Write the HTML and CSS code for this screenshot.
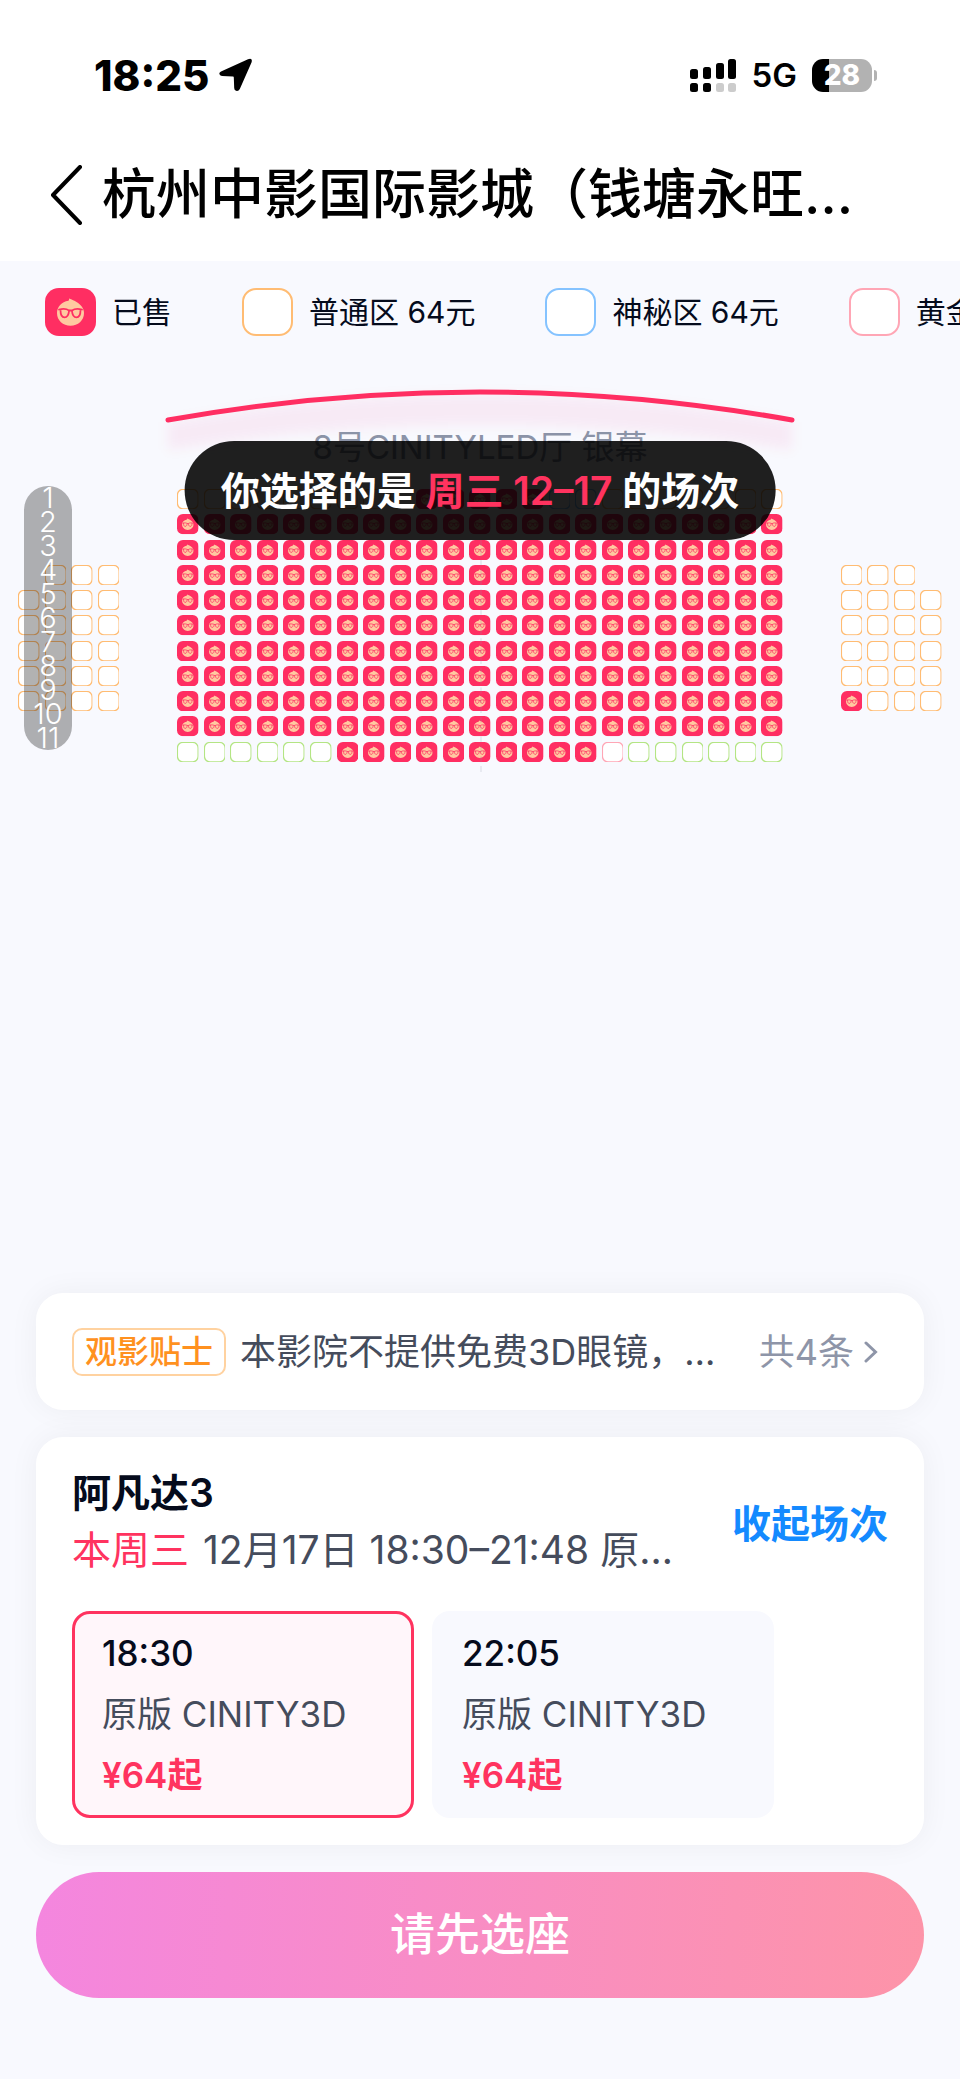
FILE: index.html
```html
<!DOCTYPE html>
<html lang="zh-CN">
<head>
<meta charset="utf-8">
<meta name="viewport" content="width=device-width, initial-scale=1">
<title>选座</title>
<link rel="stylesheet" href="styles.css">
</head>
<body>
<svg class="defs" aria-hidden="true">
  <symbol id="seat-sold" viewBox="0 0 51 48">
    <rect width="51" height="48" rx="14" fill="#ff2e62"/>
    <path d="M24 10.5C27 11.500 29.500 12.800 31.500 14C36 16.500 39 20.500 39 25C39 32.500 33 37.700 25.500 37.700S12 32.500 12 25C12 19 16.500 14 23.500 12.800C24 12 24.200 11.500 24 10.500Z" fill="#ffc9a0"/>
    <path d="M14 21.500C18 20.500 22 21 24 22.500H27C29 21 33 20.500 37 21.500M15.500 22C15.500 27 16.500 29.300 19.500 29.300C22.500 29.300 23.700 27 24 23M27 23C27.300 27 28.500 29.300 31.500 29.300C34.500 29.300 35.500 27 35.500 22" fill="none" stroke="#ff2e62" stroke-width="1.800" stroke-linecap="round"/>
  </symbol>
  <symbol id="seat-open" viewBox="0 0 51 48">
    <rect x="1" y="1" width="49" height="46" rx="13" fill="#fff" stroke="currentColor"/>
  </symbol>
</svg>
<div class="app">
  <header class="top">
    <div class="status">
      <div class="status-left">
        <time class="clock">18:25</time>
        <svg class="locate" viewBox="0 0 34 34"><path d="M2 13.500L29 1.200Q34 -.5 32.500 4.500L20.800 31Q19.500 33.500 17 32.800Q15.200 32.200 15.200 30L14.800 19.500Q14.800 18.600 14 18.600L3 18Q.6 17.500 .3 15.800Q.2 14.400 2 13.500Z"/></svg>
      </div>
      <div class="status-right">
        <svg class="signal" viewBox="0 0 46 33">
          <rect y="10" width="8" height="10" rx="2.500"/><rect x="13" y="8" width="8" height="12" rx="2.500"/><rect x="26" y="4" width="8" height="16" rx="2.500"/><rect x="38" width="8" height="20" rx="2.500"/>
          <rect y="24" width="8" height="9" rx="2.500"/><rect x="13" y="24" width="8" height="9" rx="2.500"/><rect class="off" x="26" y="24" width="8" height="9" rx="2.500"/><rect class="off" x="38" y="24" width="8" height="9" rx="2.500"/>
        </svg>
        <span class="network">5G</span>
        <span class="battery">28</span>
      </div>
    </div>
    <div class="nav">
      <button class="back" aria-label="返回"><svg viewBox="0 0 32 60"><path d="M29 2L2 30L29 58"/></svg></button>
      <h1>杭州中影国际影城（钱塘永旺…</h1>
    </div>
  </header>

  <main class="stage">
    <ul class="legend">
      <li><svg><use href="#seat-sold"/></svg>已售</li>
      <li><svg class="normal"><use href="#seat-open"/></svg>普通区 64元</li>
      <li><svg class="mystery"><use href="#seat-open"/></svg>神秘区 64元</li>
      <li><svg class="gold"><use href="#seat-open"/></svg>黄金区 64元</li>
    </ul>
    <svg class="screen" viewBox="0 0 960 48" aria-hidden="true">
      <defs><filter id="glow" x="-10%" y="-50%" width="120%" height="200%"><feGaussianBlur stdDeviation="6"/></filter></defs>
      <path class="screen-glow" d="M168 44Q480 -12 792 44V72Q480 22 168 72Z" filter="url(#glow)"/>
      <path class="screen-line" d="M168 42Q480 -14 792 42"/>
    </svg>
    <p class="hall">8号CINITYLED厅 银幕</p>
    <div class="map">
      <div class="seats" id="seats"></div>
      <ol class="rows"><li>1</li><li>2</li><li>3</li><li>4</li><li>5</li><li>6</li><li>7</li><li>8</li><li>9</li><li>10</li><li>11</li></ol>
    </div>
    <div class="toast" role="status">你选择的是 <em>周三 12–17</em> 的场次</div>
  </main>

  <section class="panel">
    <div class="card tips">
      <span class="tag">观影贴士</span>
      <p class="tip-text">本影院不提供免费3D眼镜，…</p>
      <button class="more">共4条<svg viewBox="0 0 14 22"><path d="M2 2L11.500 11L2 20"/></svg></button>
    </div>
    <div class="card show">
      <div class="show-head">
        <div class="show-info">
          <h2>阿凡达3</h2>
          <p><em>本周三</em> 12月17日 18:30–21:48 原…</p>
        </div>
        <button class="fold">收起场次</button>
      </div>
      <div class="sessions">
        <button class="session active"><span class="hour">18:30</span><span>原版 CINITY3D</span><span class="price">¥64起</span></button>
        <button class="session"><span class="hour">22:05</span><span>原版 CINITY3D</span><span class="price">¥64起</span></button>
      </div>
    </div>
    <button class="submit">请先选座</button>
  </section>
</div>
<script src="seats.js"></script>
</body>
</html>
```

FILE: styles.css
```css
* { box-sizing: border-box; margin: 0; padding: 0; }
body {
  background: #f8f9fe;
  color: #050b1c;
  font-family: Inter, "Noto Sans CJK SC", sans-serif;
}
button { border: 0; background: none; font: inherit; color: inherit; cursor: pointer; }
ul, ol { list-style: none; }
em { font-style: normal; color: #ff335f; }
.defs { display: none; }
.app { display: flex; flex-direction: column; min-height: 100vh; overflow: hidden; }

/* Status bar and title */
.top { background: #fff; color: #000; padding: 48px 80px 27px 50px; }
.status { display: flex; justify-content: space-between; align-items: center; height: 54px; padding-left: 44px; }
.status-left, .status-right { display: flex; align-items: center; }
.status-left { gap: 10px; }
.clock { font-size: 42px; font-weight: 800; }
.locate { width: 34px; height: 34px; }
.signal { width: 46px; height: 33px; margin-right: 16px; }
.signal .off { fill: #ccc; }
.network { font-size: 33px; font-weight: 600; margin-right: 15px; }
.battery {
  position: relative;
  width: 60px; height: 33px;
  border-radius: 11px;
  background: linear-gradient(90deg, #000 17px, #b2b2b2 17px);
  color: #fff;
  font-size: 28px; font-weight: 800; line-height: 33px; text-align: center;
  margin-right: 8px;
}
.battery::after {
  content: "";
  position: absolute; left: 62px; top: 11px;
  width: 3px; height: 11px;
  border-radius: 0 3px 3px 0;
  background: #b2b2b2;
}
.nav { display: flex; align-items: center; gap: 18px; padding-top: 54px; }
.back { display: flex; }
.back svg { width: 34px; height: 60px; fill: none; stroke: #000; stroke-width: 4; stroke-linecap: round; stroke-linejoin: round; }
h1 { font-size: 54px; font-weight: 500; line-height: 78px; white-space: nowrap; }

/* Seat map */
.stage { position: relative; flex: 1; }
.legend { display: flex; gap: 70px; padding: 27px 45px 42px; }
.legend li { display: flex; flex: none; align-items: center; gap: 16px; font-size: 30px; line-height: 48px; white-space: nowrap; }
.legend svg { width: 51px; height: 48px; stroke-width: 2; }
.normal { color: #ffbc73; }
.mystery { color: #85c3ff; }
.gold { color: #ffa6b5; }
.couple { color: #b4e584; }
.screen { display: block; width: 100%; overflow: visible; }
.screen-line { fill: none; stroke: #ff2e62; stroke-width: 5; stroke-linecap: round; }
.screen-glow { fill: #f03a68; fill-opacity: 0.06; }
.hall { color: #8b93a7; font-size: 33px; line-height: 42px; text-align: center; }
.map { position: relative; margin-top: 21px; padding: 0 18px; }
.map::after {
  content: "";
  position: absolute; left: 50%; top: 51px; bottom: -10px;
  border-left: 2px dashed rgba(140, 150, 170, 0.15);
}
.seats { display: grid; grid-template-columns: repeat(35, 1fr); gap: 5px; }
.seat { display: block; aspect-ratio: 51 / 48; min-width: 0; stroke-width: 3; }
.seat svg { display: block; width: 100%; height: 100%; }
.rows {
  position: absolute; left: 24px; top: -3px;
  width: 48px;
  border-radius: 24px;
  background: rgba(0, 0, 0, 0.3);
  color: #fff;
  font-size: 29px; font-weight: 300; line-height: 24px; text-align: center;
}
.toast {
  position: absolute; left: 50%; top: 180px;
  transform: translateX(-50%);
  padding: 0 36px;
  border-radius: 50px;
  background: rgba(0, 0, 0, 0.88);
  color: #fff;
  font-size: 39px; font-weight: 600; line-height: 99px; white-space: nowrap;
}

/* Bottom panel */
.panel { display: flex; flex-direction: column; gap: 27px; padding: 0 36px 81px; }
.card { border-radius: 27px; background: #fff; box-shadow: 0 0 30px rgba(0, 0, 0, 0.05); padding: 0 36px; }
.tips { display: flex; align-items: center; height: 117px; font-size: 36px; line-height: 54px; color: #454c5c; }
.tag {
  border: 2px solid #ffd2a0; border-radius: 10px;
  color: #ff911f;
  font-size: 32px; font-weight: 500; line-height: 44px;
  padding: 0 11px; margin-right: 14px;
}
.tip-text { flex: 1; white-space: nowrap; }
.more { display: flex; align-items: center; gap: 10px; color: #8e95a8; margin-right: 10px; }
.more svg { width: 14px; height: 22px; fill: none; stroke: #8e95a8; stroke-width: 3; stroke-linecap: round; }
.show { padding: 27px 36px; }
.show-head { display: flex; align-items: center; justify-content: space-between; margin-bottom: 33px; }
.show-info { font-size: 39px; line-height: 57px; color: #454c5c; white-space: nowrap; }
.show-info em { margin-right: 3px; }
h2 { font-size: 39px; font-weight: 600; color: #050b1c; }
.fold { color: #148aff; font-size: 39px; font-weight: 600; }
.sessions { display: flex; gap: 18px; }
.session {
  display: flex; flex-direction: column;
  width: 342px;
  padding: 9px 27px;
  border: 3px solid #f8f9fe; border-radius: 18px;
  background: #f8f9fe;
  color: #454c5c;
  font-size: 35px; line-height: 61px; text-align: left;
}
.session.active { border-color: #ff335f; background: #fff6fa; }
.hour { color: #050b1c; font-weight: 500; }
.price { color: #ff335f; font-weight: 600; }
.submit {
  height: 126px;
  border-radius: 63px;
  background: linear-gradient(94deg, #f486df, #fd94a8);
  color: #fff;
  font-size: 45px; font-weight: 500; line-height: 60px;
}
```

FILE: seats.js
```javascript
// x sold, n normal, m mystery, g gold, c couple, . aisle
const side = (left, right) => left + '..' + 'x'.repeat(23) + '..' + right;
const plan = [
  '......' + 'n'.repeat(9) + 'xxxxx' + 'mm' + 'n'.repeat(7) + '......',
  side('....', '....'),
  side('....', '....'),
  side('.nnn', 'nnn.'),
  side('nnnn', 'nnnn'),
  side('nnnn', 'nnnn'),
  side('nnnn', 'nnnn'),
  side('nnnn', 'nnnn'),
  side('nnnn', 'xnnn'),
  side('....', '....'),
  '......' + 'c'.repeat(6) + 'x'.repeat(10) + 'g' + 'c'.repeat(6) + '......'
];
const zones = { n: 'normal', m: 'mystery', g: 'gold', c: 'couple', x: 'sold' };

document.getElementById('seats').innerHTML = plan.map((row, r) =>
  [...row].map((kind, c) => {
    if (kind === '.') return '<span class="seat"></span>';
    const shape = kind === 'x' ? 'seat-sold' : 'seat-open';
    return `<button class="seat ${zones[kind]}" aria-label="${r + 1}排${c + 1}列"${kind === 'x' ? ' disabled' : ''}><svg><use href="#${shape}"/></svg></button>`;
  }).join('')
).join('');
```
